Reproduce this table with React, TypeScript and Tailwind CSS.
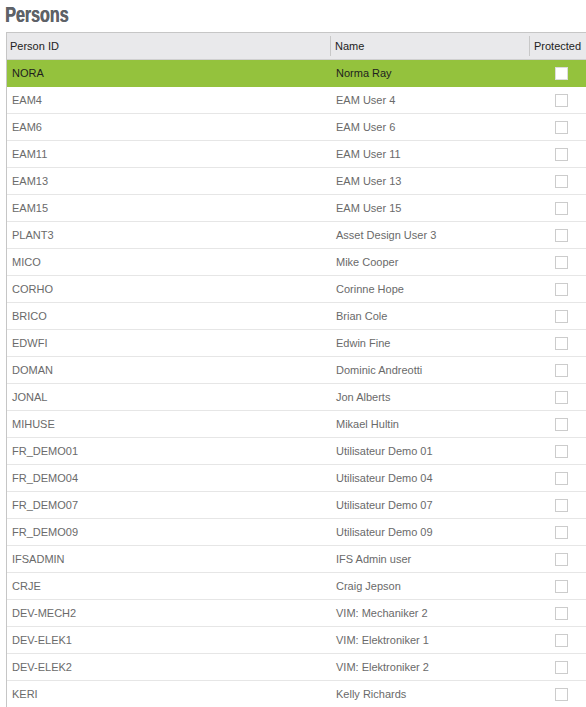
import { useState } from "react";

type Person = {
  id: string;
  name: string;
  protected: boolean;
};

const persons: Person[] = [
  { id: "NORA", name: "Norma Ray", protected: false },
  { id: "EAM4", name: "EAM User 4", protected: false },
  { id: "EAM6", name: "EAM User 6", protected: false },
  { id: "EAM11", name: "EAM User 11", protected: false },
  { id: "EAM13", name: "EAM User 13", protected: false },
  { id: "EAM15", name: "EAM User 15", protected: false },
  { id: "PLANT3", name: "Asset Design User 3", protected: false },
  { id: "MICO", name: "Mike Cooper", protected: false },
  { id: "CORHO", name: "Corinne Hope", protected: false },
  { id: "BRICO", name: "Brian Cole", protected: false },
  { id: "EDWFI", name: "Edwin Fine", protected: false },
  { id: "DOMAN", name: "Dominic Andreotti", protected: false },
  { id: "JONAL", name: "Jon Alberts", protected: false },
  { id: "MIHUSE", name: "Mikael Hultin", protected: false },
  { id: "FR_DEMO01", name: "Utilisateur Demo 01", protected: false },
  { id: "FR_DEMO04", name: "Utilisateur Demo 04", protected: false },
  { id: "FR_DEMO07", name: "Utilisateur Demo 07", protected: false },
  { id: "FR_DEMO09", name: "Utilisateur Demo 09", protected: false },
  { id: "IFSADMIN", name: "IFS Admin user", protected: false },
  { id: "CRJE", name: "Craig Jepson", protected: false },
  { id: "DEV-MECH2", name: "VIM: Mechaniker 2", protected: false },
  { id: "DEV-ELEK1", name: "VIM: Elektroniker 1", protected: false },
  { id: "DEV-ELEK2", name: "VIM: Elektroniker 2", protected: false },
  { id: "KERI", name: "Kelly Richards", protected: false },
];

const App = () => {
  const [selected, setSelected] = useState("NORA");

  return (
    <div className="w-[586px] h-[707px] overflow-hidden bg-white font-['Liberation_Sans',Arial,sans-serif]">
      <div className="h-[32px] pl-[5px] pt-[2px]">
        <h1 className="inline-block text-[22px] leading-[25px] font-bold text-[#5e6268] [text-shadow:0.6px_0_0_#5e6268] origin-left scale-x-[0.73]">
          Persons
        </h1>
      </div>

      <div className="ml-[6px] w-[600px] border-t border-l border-[#c6c6c6]">
        {/* Header */}
        <div className="flex h-[27px] items-center bg-[#e9e9eb] border-b border-[#d0d0d0] text-[11px] text-[#222]">
          <div className="w-[323px] pl-[3px]">Person ID</div>
          <div className="w-[199px] h-[20px] flex items-center border-l border-[#c8c8c8] pl-[4px]">Name</div>
          <div className="flex-1 h-[20px] flex items-center border-l border-[#c8c8c8] pl-[4px]">Protected</div>
        </div>

        {/* Rows */}
        {persons.map((p) => {
          const isSel = p.id === selected;
          return (
            <div
              key={p.id}
              onClick={() => setSelected(p.id)}
              className={`flex h-[27px] items-center text-[11px] border-b ${
                isSel ? "bg-[#94c23d] text-[#1e1e1e] border-[#94c23d]" : "bg-white text-[#6a6a6a] border-[#e6e6e6]"
              }`}
            >
              <div className="w-[324px] pl-[5px]">{p.id}</div>
              <div className="w-[224px] pl-[5px]">{p.name}</div>
              <div className="flex-1">
                <span
                  className={`block w-[13px] h-[13px] border ${
                    isSel ? "bg-white border-[#dcdcdc]" : "bg-white border-[#cccccc]"
                  }`}
                />
              </div>
            </div>
          );
        })}
      </div>
    </div>
  );
};

export default App;
